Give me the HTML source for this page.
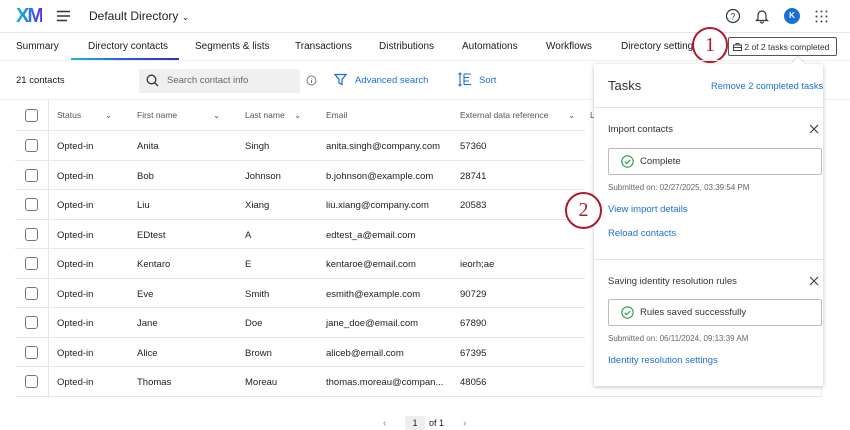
<!DOCTYPE html>
<html><head><meta charset="utf-8"><style>
*{margin:0;padding:0;box-sizing:border-box}
body{width:850px;height:425px;overflow:hidden;background:#fff;font-family:"Liberation Sans",sans-serif;color:#1a1a1a;position:relative}
.a{position:absolute;white-space:nowrap}
.t{font-size:10px}
.blue{color:#1a6fd6}
.cb{position:absolute;left:24px;width:13px;height:13px;border:1px solid #777;border-radius:3px;background:#fff}
.row{position:absolute;left:15px;width:570px;height:29.5px;border-bottom:1px solid #e8e8e8;font-size:9.5px;color:#222}
.row span{position:absolute;top:10px}
.hd span{color:#555;font-size:8.5px}
.chev{position:absolute;top:10px;font-size:9px;color:#666}
</style></head><body>
<div class="a" style="left:16px;top:5px;font-size:20px;font-weight:bold;letter-spacing:-2px;background:linear-gradient(90deg,#11b8c8,#2a7cf0,#5b2be0);-webkit-background-clip:text;color:transparent">XM</div>
<svg class="a" style="left:56px;top:10px" width="16" height="12"><path d="M1 1.5H14M1 6H14M1 10.5H11" stroke="#333" stroke-width="1.5"/></svg>
<div class="a" style="left:89px;top:9px;font-size:12px;color:#222">Default Directory <span style="font-size:9px">&#8964;</span></div>
<svg class="a" style="left:725px;top:8px" width="16" height="16"><circle cx="8" cy="8" r="6.5" fill="none" stroke="#333" stroke-width="1.2"/><text x="8" y="11.5" font-size="9" text-anchor="middle" fill="#333" font-family="Liberation Sans">?</text></svg>
<svg class="a" style="left:755px;top:8px" width="14" height="16"><path d="M3 11V7a4 4 0 0 1 8 0v4l1.5 1.5h-11z M5.5 13.5a1.5 1.5 0 0 0 3 0" fill="none" stroke="#333" stroke-width="1.2"/></svg>
<div class="a" style="left:784px;top:8px;width:16px;height:16px;border-radius:50%;background:#1a6fd6;color:#fff;font-size:8px;font-weight:bold;text-align:center;line-height:16px">K</div>
<svg class="a" style="left:815px;top:10px" width="13" height="13"><g fill="#444"><circle cx="1.5" cy="1.5" r="1"/><circle cx="6.5" cy="1.5" r="1"/><circle cx="11.5" cy="1.5" r="1"/><circle cx="1.5" cy="6.5" r="1"/><circle cx="6.5" cy="6.5" r="1"/><circle cx="11.5" cy="6.5" r="1"/><circle cx="1.5" cy="11.5" r="1"/><circle cx="6.5" cy="11.5" r="1"/><circle cx="11.5" cy="11.5" r="1"/></g></svg>
<div class="a" style="left:0;top:32px;width:850px;border-top:1px solid #e6e6e6"></div>
<div class="a t" style="left:16px;top:41px">Summary</div>
<div class="a t" style="left:88px;top:41px">Directory contacts</div>
<div class="a" style="left:71px;top:58px;width:108px;height:2px;background:linear-gradient(90deg,#1fb8d8,#2a5ae0,#3a2bb8)"></div>
<div class="a t" style="left:195px;top:41px">Segments &amp; lists</div>
<div class="a t" style="left:295px;top:41px">Transactions</div>
<div class="a t" style="left:379px;top:41px">Distributions</div>
<div class="a t" style="left:462px;top:41px">Automations</div>
<div class="a t" style="left:546px;top:41px">Workflows</div>
<div class="a t" style="left:621px;top:41px">Directory settings</div>
<div class="a" style="left:728px;top:37px;width:109px;height:19px;border:1px solid #555;border-radius:2px;font-size:8.5px;color:#333;padding:4px 0 0 4px"><svg width="9" height="8" style="vertical-align:-1px"><rect x="0.5" y="2" width="8" height="5.5" fill="none" stroke="#444"/><path d="M3 2V0.5h3V2M0.5 4.5h8" stroke="#444" fill="none"/></svg> 2 of 2 tasks completed</div>
<div class="a" style="left:692px;top:27px;width:36px;height:36px;border:2px solid #b01a28;border-radius:50%;background:#fff;color:#b01a28;font-size:20px;text-align:center;line-height:32px;font-family:'Liberation Serif',serif">1</div>
<div class="a" style="left:0;top:60px;width:850px;border-top:1px solid #eee"></div>
<div class="a" style="left:16px;top:75px;font-size:9.5px">21 contacts</div>
<div class="a" style="left:139px;top:69px;width:161px;height:24px;background:#f0f0f0;border-radius:2px"></div>
<svg class="a" style="left:146px;top:74px" width="13" height="13"><circle cx="5.5" cy="5.5" r="4.3" fill="none" stroke="#333" stroke-width="1.3"/><path d="M8.7 8.7L12 12" stroke="#333" stroke-width="1.3"/></svg>
<div class="a" style="left:167px;top:75px;font-size:9.5px;color:#666">Search contact info</div>
<svg class="a" style="left:306px;top:75px" width="11" height="11"><circle cx="5.5" cy="5.5" r="4.5" fill="none" stroke="#777"/><path d="M5.5 5v3M5.5 3.2v.6" stroke="#777"/></svg>
<svg class="a" style="left:334px;top:73px" width="13" height="13"><path d="M1 1.5h11L8 6.5v5l-3 -1.5v-3.5z" fill="none" stroke="#1a6fd6" stroke-width="1.2"/></svg>
<div class="a blue" style="left:355px;top:75px;font-size:9.5px">Advanced search</div>
<svg class="a" style="left:458px;top:72px" width="14" height="15"><path d="M2 1v13M0.5 2.5L2 1l1.5 1.5M0.5 12.5L2 14l1.5-1.5M6 2h7M6 5.5h5M6 9h5M6 12.5h7M6 2v10.5" stroke="#1a6fd6" fill="none" stroke-width="1.1"/></svg>
<div class="a blue" style="left:479px;top:75px;font-size:9.5px">Sort</div>
<div class="a" style="left:0;top:99px;width:850px;border-top:1px solid #eee"></div>
<div class="a" style="left:48px;top:100px;height:298px;border-left:1px solid #e6e6e6"></div>
<div class="row hd" style="top:100px;height:31px"><div class="cb" style="left:10px;top:9px"></div><span style="left:42px">Status</span><span class="chev" style="left:90px">&#8964;</span><span style="left:122px">First name</span><span class="chev" style="left:198px">&#8964;</span><span style="left:230px">Last name</span><span class="chev" style="left:279px">&#8964;</span><span style="left:311px">Email</span><span style="left:445px">External data reference</span><span class="chev" style="left:553px">&#8964;</span><span style="left:575px">L</span></div>
<div class="row" style="top:131px"><div class="cb" style="left:10px;top:8px"></div><span style="left:42px">Opted-in</span><span style="left:122px">Anita</span><span style="left:230px">Singh</span><span style="left:311px">anita.singh@company.com</span><span style="left:445px">57360</span></div>
<div class="row" style="top:160.5px"><div class="cb" style="left:10px;top:8px"></div><span style="left:42px">Opted-in</span><span style="left:122px">Bob</span><span style="left:230px">Johnson</span><span style="left:311px">b.johnson@example.com</span><span style="left:445px">28741</span></div>
<div class="row" style="top:190px"><div class="cb" style="left:10px;top:8px"></div><span style="left:42px">Opted-in</span><span style="left:122px">Liu</span><span style="left:230px">Xiang</span><span style="left:311px">liu.xiang@company.com</span><span style="left:445px">20583</span></div>
<div class="row" style="top:219.5px"><div class="cb" style="left:10px;top:8px"></div><span style="left:42px">Opted-in</span><span style="left:122px">EDtest</span><span style="left:230px">A</span><span style="left:311px">edtest_a@email.com</span></div>
<div class="row" style="top:249px"><div class="cb" style="left:10px;top:8px"></div><span style="left:42px">Opted-in</span><span style="left:122px">Kentaro</span><span style="left:230px">E</span><span style="left:311px">kentaroe@email.com</span><span style="left:445px">ieorh;ae</span></div>
<div class="row" style="top:278.5px"><div class="cb" style="left:10px;top:8px"></div><span style="left:42px">Opted-in</span><span style="left:122px">Eve</span><span style="left:230px">Smith</span><span style="left:311px">esmith@example.com</span><span style="left:445px">90729</span></div>
<div class="row" style="top:308px"><div class="cb" style="left:10px;top:8px"></div><span style="left:42px">Opted-in</span><span style="left:122px">Jane</span><span style="left:230px">Doe</span><span style="left:311px">jane_doe@email.com</span><span style="left:445px">67890</span></div>
<div class="row" style="top:337.5px"><div class="cb" style="left:10px;top:8px"></div><span style="left:42px">Opted-in</span><span style="left:122px">Alice</span><span style="left:230px">Brown</span><span style="left:311px">aliceb@email.com</span><span style="left:445px">67395</span></div>
<div class="row" style="top:367px"><div class="cb" style="left:10px;top:8px"></div><span style="left:42px">Opted-in</span><span style="left:122px">Thomas</span><span style="left:230px">Moreau</span><span style="left:311px">thomas.moreau@compan...</span><span style="left:445px">48056</span></div>
<div class="a" style="left:15px;top:396px;width:806px;border-top:1px solid #e8e8e8"></div>
<div class="a" style="left:821px;top:100px;height:297px;border-left:1px solid #eee"></div>
<div class="a" style="left:383px;top:418px;font-size:10px;color:#888">&#8249;</div>
<div class="a" style="left:405px;top:416px;width:20px;height:14px;background:#eee;border-radius:2px;font-size:9px;text-align:center;padding-top:2px">1</div>
<div class="a" style="left:429px;top:418px;font-size:9px">of 1</div>
<div class="a" style="left:463px;top:418px;font-size:10px;color:#888">&#8250;</div>
<div class="a" style="left:594px;top:64px;width:229px;height:322px;background:#fff;box-shadow:0 1px 4px rgba(0,0,0,.25);border-radius:2px"></div>
<div class="a" style="left:793px;top:59px;width:10px;height:10px;background:#fff;transform:rotate(45deg);box-shadow:-1px -1px 1px rgba(0,0,0,.12)"></div>
<div class="a" style="left:608px;top:78px;font-size:13px;color:#333">Tasks</div>
<div class="a blue" style="left:711px;top:81px;font-size:9.3px">Remove 2 completed tasks</div>
<div class="a" style="left:594px;top:107px;width:229px;border-top:1px solid #e3e3e3"></div>
<div class="a" style="left:608px;top:124px;font-size:9.5px;color:#333">Import contacts</div>
<svg class="a" style="left:809px;top:124px" width="10" height="10"><path d="M1 1l8 8M9 1l-8 8" stroke="#444" stroke-width="1.2"/></svg>
<div class="a" style="left:608px;top:148px;width:214px;height:27px;border:1px solid #bbb;border-radius:2px"></div>
<svg class="a" style="left:621px;top:155px" width="13" height="13"><circle cx="6.5" cy="6.5" r="5.7" fill="none" stroke="#2a9a4a" stroke-width="1.1"/><path d="M3.8 6.7l2 2 3.5-3.8" fill="none" stroke="#2a9a4a" stroke-width="1.1"/></svg>
<div class="a" style="left:640px;top:156px;font-size:9.5px;color:#333">Complete</div>
<div class="a" style="left:608px;top:183px;font-size:8px;color:#666">Submitted on: 02/27/2025, 03:39:54 PM</div>
<div class="a blue" style="left:608px;top:204px;font-size:9.5px">View import details</div>
<div class="a blue" style="left:608px;top:228px;font-size:9.5px">Reload contacts</div>
<div class="a" style="left:594px;top:259px;width:229px;border-top:1px solid #e3e3e3"></div>
<div class="a" style="left:608px;top:276px;font-size:9.5px;color:#333">Saving identity resolution rules</div>
<svg class="a" style="left:809px;top:276px" width="10" height="10"><path d="M1 1l8 8M9 1l-8 8" stroke="#444" stroke-width="1.2"/></svg>
<div class="a" style="left:608px;top:299px;width:214px;height:27px;border:1px solid #bbb;border-radius:2px"></div>
<svg class="a" style="left:621px;top:306px" width="13" height="13"><circle cx="6.5" cy="6.5" r="5.7" fill="none" stroke="#2a9a4a" stroke-width="1.1"/><path d="M3.8 6.7l2 2 3.5-3.8" fill="none" stroke="#2a9a4a" stroke-width="1.1"/></svg>
<div class="a" style="left:640px;top:307px;font-size:9.5px;color:#333">Rules saved successfully</div>
<div class="a" style="left:608px;top:334px;font-size:8px;color:#666">Submitted on: 06/11/2024, 09:13:39 AM</div>
<div class="a blue" style="left:608px;top:355px;font-size:9.5px">Identity resolution settings</div>
<div class="a" style="left:565px;top:192px;width:37px;height:37px;border:2px solid #b01a28;border-radius:50%;background:#fff;color:#b01a28;font-size:20px;text-align:center;line-height:33px;font-family:'Liberation Serif',serif">2</div>
</body></html>
